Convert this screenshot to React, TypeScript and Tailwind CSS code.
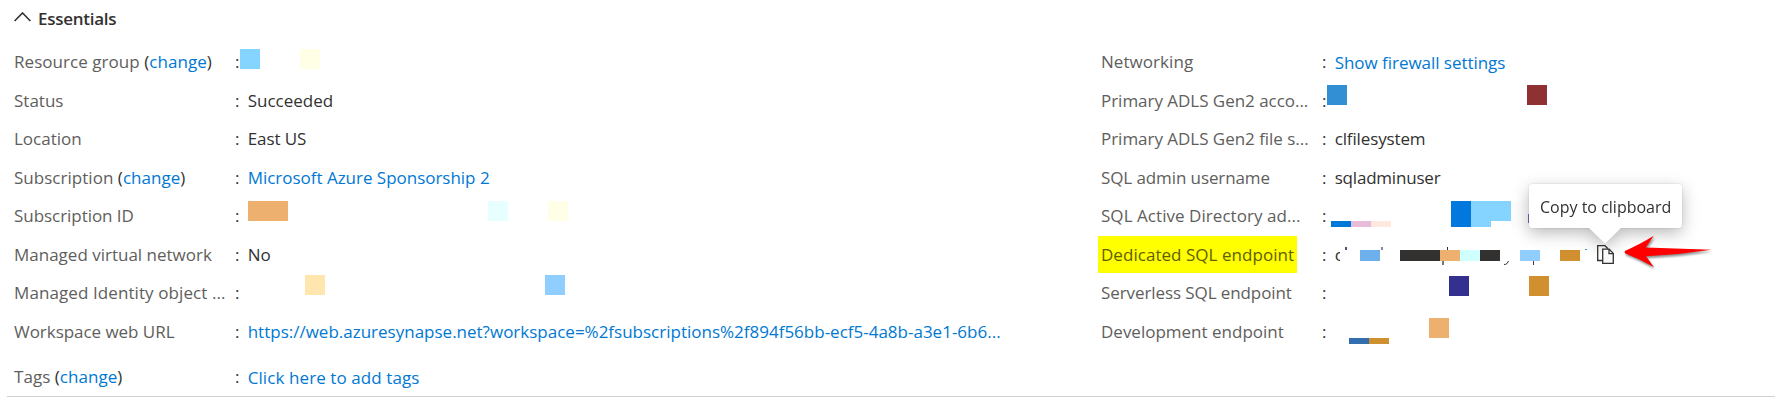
import type { ReactNode } from "react";

type Row = { label: ReactNode; value?: ReactNode; blocks?: string[]; extra?: ReactNode };

const Change = () => (
  <>
    <span className="text-[#323130]">(</span>
    <a className="text-[#0078d4]">change</a>
    <span className="text-[#323130]">)</span>
  </>
);

const leftRows: Row[] = [
  {
    label: <span className="tracking-[0.05px]">Resource group <Change /></span>,
    blocks: ["left-[-7px] top-[7px] size-5 bg-[#85d3ff]", "left-[53px] top-[7px] size-5 bg-[#ffffe6]"],
  },
  { label: "Status", value: "Succeeded" },
  { label: "Location", value: <span className="tracking-[-0.08px]">East US</span> },
  {
    label: <span className="tracking-[0.03px]">Subscription <Change /></span>,
    value: <a className="tracking-[-0.02px] text-[#0078d4]">Microsoft Azure Sponsorship 2</a>,
  },
  {
    label: <span className="tracking-[-0.05px]">Subscription ID</span>,
    blocks: [
      "left-px top-[5px] h-5 w-10 bg-[#edb06e]",
      "left-[241px] top-[5px] size-5 bg-[#e8ffff]",
      "left-[301px] top-[5px] size-5 bg-[#ffffe8]",
    ],
  },
  { label: "Managed virtual network", value: "No" },
  {
    label: <span className="tracking-[0.09px]">Managed Identity object ...</span>,
    blocks: ["left-[58px] top-[2px] size-5 bg-[#ffe6ae]", "left-[298px] top-[2px] size-5 bg-[#8fceff]"],
  },
  {
    label: <span className="tracking-[-0.04px]">Workspace web URL</span>,
    value: (
      <a className="text-[#0078d4]">
        https://web.azuresynapse.net?workspace=%2fsubscriptions%2f894f56bb-ecf5-4a8b-a3e1-6b6...
      </a>
    ),
  },
];

const CopyWithTooltip = () => (
  <>
    <div className="absolute left-[195px] top-[-51px] z-10 w-[153px] drop-shadow-[0_5px_8px_rgba(0,0,0,0.27)]">
      <div className="h-11 rounded-[3px] bg-white pl-[11px] text-[16px] leading-[47px] text-[#323130] shadow-[0_0_2px_rgba(0,0,0,0.18)]">
        Copy to clipboard
      </div>
      <svg className="absolute left-[60px] top-[43px] h-[17px] w-8" viewBox="0 0 32 17" fill="#fff">
        <path d="M0 0H32V1L16 16.5 0 1Z" />
      </svg>
    </div>
    <svg
      className="absolute left-[263px] top-[10px] z-20 h-[19px] w-[17px]"
      viewBox="0 0 17 19"
      fill="none"
      stroke="#323130"
      strokeWidth="1.3"
    >
      <path d="M5.5 15.5H.7V.7H8L11 3.7" />
      <path d="M5.7 4.2H12.2L16.3 8.4V18.3H5.7Z" fill="#fafafa" />
      <path d="M12 4.2V8.6H16.3" />
    </svg>
    <svg
      className="absolute left-[286px] top-0 z-20 h-[36px] w-[96px] drop-shadow-[1px_2px_1px_rgba(0,0,0,0.45)]"
      viewBox="0 0 96 36"
      fill="#ff0000"
    >
      <path d="M4.800 15.900Q18 10.500 33.800 .8L25.800 12.400 91.500 14.700 58 19 26 21.200 33.800 32Q19 23.500 4.800 18.200Z" />
    </svg>
  </>
);

const rightRows: Row[] = [
  {
    label: <span className="tracking-[0.06px]">Networking</span>,
    value: <a className="relative top-px tracking-[-0.04px] text-[#0078d4]">Show firewall settings</a>,
  },
  {
    label: <span className="tracking-[-0.03px]">Primary ADLS Gen2 acco...</span>,
    blocks: ["left-[-7px] top-[4px] size-5 bg-[#338fd3]", "left-[193px] top-[4px] size-5 bg-[#8f3033]"],
  },
  {
    label: <span className="tracking-[-0.03px]">Primary ADLS Gen2 file s...</span>,
    value: <span className="tracking-[-0.13px]">clfilesystem</span>,
  },
  {
    label: <span className="tracking-[-0.1px]">SQL admin username</span>,
    value: <span className="tracking-[-0.2px]">sqladminuser</span>,
  },
  {
    label: <span className="tracking-[0.05px]">SQL Active Directory ad...</span>,
    blocks: [
      "left-[-3px] top-[25px] h-1.5 w-5 bg-[#0078d7]",
      "left-[17px] top-[25px] h-1.5 w-5 bg-[#e8bcd9]",
      "left-[37px] top-[25px] h-1.5 w-5 bg-[#ffe9df]",
      "left-[117px] top-[5px] h-[26px] w-5 bg-[#0078de]",
      "left-[137px] top-[5px] h-5 w-10 bg-[#85d3ff]",
      "left-[137px] top-[25px] h-1.5 w-5 bg-[#85d3ff]",
      "left-[177px] top-[5px] h-[26px] w-4 bg-[#fdfdfd]",
      "left-[194px] top-[18px] h-[9px] w-px bg-[#7b68c4]",
    ],
  },
  {
    label: (
      <span className="-ml-[3px] inline-block h-[37px] w-[199px] bg-[#ffff00] pl-[3px] leading-[38px] tracking-[0.04px] text-[#605e00]">
        Dedicated SQL endpoint
      </span>
    ),
    value: <span className="inline-block w-[5px] overflow-hidden align-top leading-[40px]">c</span>,
    blocks: [
      "left-[11px] top-[12px] h-[3px] w-0.5 bg-[#5b4a70]",
      "left-[47px] top-[12px] h-[3px] w-0.5 bg-[#7b8bab]",
      "left-[113px] top-[12px] h-[3px] w-px bg-[#323130]",
      "left-[108px] top-[26px] h-1 w-px bg-[#a07040]",
      "left-[109px] top-[26px] h-1 w-px bg-[#2f83c4]",
      "left-[199px] top-[26px] h-1 w-px bg-[#6b2a2a]",
      "left-[251px] top-[14px] h-px w-0.5 bg-[#4d8fc4]",
      "left-[26px] top-[15px] h-[11px] w-5 bg-[#6eb0ec]",
      "left-[66px] top-[15px] h-[11px] w-10 bg-[#333130]",
      "left-[106px] top-[15px] h-[11px] w-5 bg-[#edb06e]",
      "left-[126px] top-[15px] h-[11px] w-5 bg-[#d0ffff]",
      "left-[146px] top-[15px] h-[11px] w-5 bg-[#333130]",
      "left-[186px] top-[15px] h-[11px] w-5 bg-[#8fceff]",
      "left-[226px] top-[15px] h-[11px] w-5 bg-[#d0902f]",
    ],
    extra: (
      <>
        <svg className="absolute left-[170px] top-[26px] h-1 w-[5px]" viewBox="0 0 5 4" fill="none" stroke="#323130">
          <path d="M0 3.400H1.500Q3 3.400 4.500 0" />
        </svg>
        <CopyWithTooltip />
      </>
    ),
  },
  {
    label: <span className="tracking-[-0.09px]">Serverless SQL endpoint</span>,
    blocks: ["left-[115px] top-[3px] size-5 bg-[#33308f]", "left-[195px] top-[3px] size-5 bg-[#d0902f]"],
  },
  {
    label: "Development endpoint",
    blocks: [
      "left-[15px] top-[26px] h-1.5 w-5 bg-[#336eae]",
      "left-[35px] top-[26px] h-1.5 w-5 bg-[#d0902f]",
      "left-[95px] top-[6px] size-5 bg-[#edb06e]",
    ],
  },
];

function Entry({ row }: { row: Row }) {
  return (
    <div className="flex h-[38px] leading-[40px] odd:h-[39px]">
      <div className="w-[222px] shrink-0 pl-px text-[#605e5c]">{row.label}</div>
      <div className="w-3 shrink-0">:</div>
      <div className="relative grow pl-[0.7px] text-[#323130]">
        {row.value}
        {row.blocks?.map((b) => <i key={b} className={"absolute block " + b} />)}
        {row.extra}
      </div>
    </div>
  );
}

export default function App() {
  return (
    <div className="h-[412px] overflow-hidden whitespace-nowrap bg-white font-['Open_Sans',sans-serif] text-[17px] text-[#323130]">
      <div className="flex h-[42px] items-start pl-[14px] leading-[37px]">
        <svg className="mt-3 h-[10px] w-[17px]" viewBox="0 0 17 10" fill="none" stroke="#323130" strokeWidth="1.6">
          <path d="M.6 9 8.5 1 16.4 9" />
        </svg>
        <span className="ml-[7px] font-semibold tracking-[-0.28px]">Essentials</span>
      </div>
      <div className="flex">
        <div className="w-[1087px] pl-[13px]">{leftRows.map((r, i) => <Entry key={i} row={r} />)}</div>
        <div className="grow pl-[13px]">{rightRows.map((r, i) => <Entry key={i} row={r} />)}</div>
      </div>
      <div className="ml-[7px] flex h-[47px] border-b border-[#d2d0ce] pl-[6px] pt-[7px] leading-[40px]">
        <div className="w-[222px] pl-px tracking-[0.04px] text-[#605e5c]">Tags <Change /></div>
        <div className="w-3">:</div>
        <a className="relative top-px pl-[0.7px] tracking-[0.09px] text-[#0078d4]">Click here to add tags</a>
      </div>
    </div>
  );
}
